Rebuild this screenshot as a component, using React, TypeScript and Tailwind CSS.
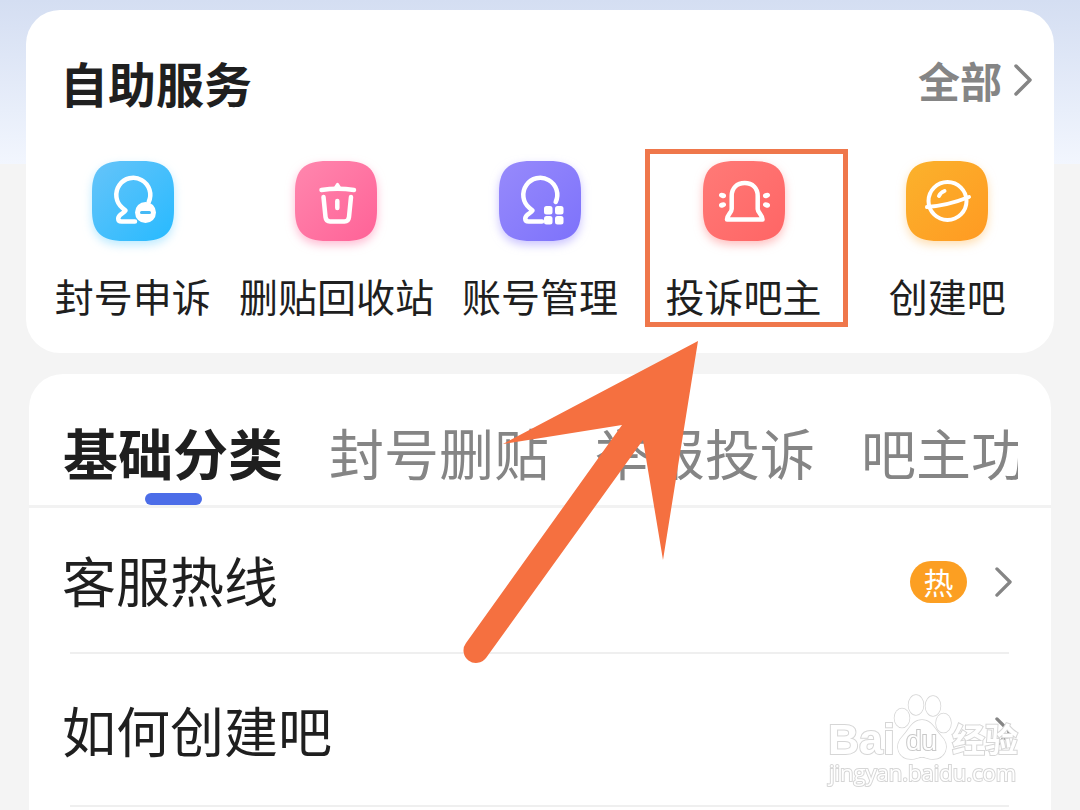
import React from 'react';

const SQUIRCLE = 'M32 0H50C73 0 82 9 82 31V49C82 71 73 80 50 80H32C9 80 0 71 0 49V31C0 9 9 0 32 0Z';
const HEAD = 'M56.7 41A17 17 0 1 0 30.5 47L33.500 49.5C32 52.500 26.5 53 26.2 57.500Q26.200 60.5 29.5 60.5H43';

const AppealIcon = () => (
    <>
        <path d={HEAD} />
        <circle cx="53.5" cy="51.5" r="10.5" fill="white" stroke="none" />
        <path d="M49.5 51.5H57.5" stroke="#45b9f5" strokeWidth="3" />
    </>
);

const TrashIcon = () => (
    <>
        <path d="M26.5 29Q42.5 26.5 59 29" />
        <path d="M40.5 26L42.5 23L44.5 26Z" strokeWidth="2.5" fill="white" />
        <path d="M28.5 36L30.5 56Q31 60.5 35 60.5H49.5Q53.5 60.500 54 56L56 36" />
        <path d="M42.3 40V47" strokeWidth="4.5" />
    </>
);

const AccountIcon = () => (
    <>
        <path d={HEAD} />
        <g fill="white" stroke="none">
            <rect x="45" y="45" width="8.5" height="8.5" rx="2.5" />
            <rect x="56" y="45" width="8.5" height="8.5" rx="2.5" />
            <rect x="45" y="55" width="8.5" height="8.5" rx="2.5" />
            <rect x="56" y="55" width="8.5" height="8.5" rx="2.5" />
        </g>
    </>
);

const AlarmIcon = () => (
    <>
        <path d="M28.7 35C28.7 27 34 22 41.7 22S54.7 27 54.7 35V48C55 52 59 53 59.5 58.500H24C24.500 53 28.5 52 28.7 48Z" />
        <g fill="white" stroke="none">
            <ellipse cx="19.5" cy="34.5" rx="3.6" ry="2.5" transform="rotate(15 19.5 34.5)" />
            <ellipse cx="19.5" cy="44" rx="3.6" ry="2.5" transform="rotate(-15 19.5 44)" />
            <ellipse cx="63.5" cy="34.5" rx="3.6" ry="2.5" transform="rotate(-15 63.5 34.5)" />
            <ellipse cx="63.5" cy="44" rx="3.6" ry="2.5" transform="rotate(15 63.5 44)" />
        </g>
    </>
);

const PlanetIcon = () => (
    <>
        <circle cx="41.5" cy="40" r="19" strokeWidth="4" />
        <path d="M21 46Q42 44.500 63 36" strokeWidth="4" />
        <path d="M33 35Q34.5 31.5 38.5 30" strokeWidth="4" />
    </>
);

const services = [
    { id: 'appeal', label: '封号申诉', from: '#66c4f9', to: '#27baff', shadow: 'drop-shadow-[0_4px_5px_#8fdcff99]', Icon: AppealIcon },
    { id: 'trash', label: '删贴回收站', from: '#ff87ae', to: '#ff6297', shadow: 'drop-shadow-[0_4px_5px_#ff8fb599]', Icon: TrashIcon },
    { id: 'account', label: '账号管理', from: '#978afb', to: '#7d72fb', shadow: 'drop-shadow-[0_4px_5px_#a79bff99]', Icon: AccountIcon },
    { id: 'report', label: '投诉吧主', from: '#ff7a77', to: '#ff6565', shadow: 'drop-shadow-[0_4px_5px_#ff959599]', Icon: AlarmIcon, marked: true },
    { id: 'create', label: '创建吧', from: '#fbb22c', to: '#ff9a22', shadow: 'drop-shadow-[0_4px_5px_#ffca8099]', Icon: PlanetIcon },
];

const tabs = ['基础分类', '封号删贴', '举报投诉', '吧主功能'];

const questions = [
    { title: '客服热线', hot: true },
    { title: '如何创建吧', hot: false },
];

const Chevron = ({ className }: { className: string }) => (
    <svg viewBox="0 0 18 32" className={className} fill="none" stroke="#858585" strokeWidth="3.5" strokeLinecap="round" strokeLinejoin="round" aria-hidden="true">
        <path d="M2 2L16 16L2 30" />
    </svg>
);

// Orange frame and arrow pointing at one service
const Marker = () => (
    <div className="absolute inset-x-0 -top-3 z-20 pointer-events-none translate-x-[3px]">
        <div className="h-[178px] border-[5px] border-[#ef774b]" />
        <svg viewBox="0 0 240 324" className="absolute top-[191px] -left-[183px] w-[240px] h-[324px]" overflow="visible" fill="#f57040" aria-hidden="true">
            <path d="M236 1L41 104L160 85L4 303A12.500 12.500 0 0 0 24 318L181 100L201 220Z" />
        </svg>
    </div>
);

const Watermark = () => (
    <svg viewBox="0 0 200 104" className="fixed right-[55px] bottom-[14px] z-30 w-[200px] h-[104px] pointer-events-none" fill="white" stroke="#d6d6d6" strokeWidth="2" paintOrder="stroke">
        <text x="3" y="62" fontFamily="Liberation Sans" fontWeight="700" fontSize="43">Bai</text>
        <path d="M97 28C107 28 110 38 116 44C126 54 120 67 108 67C102 67 101 65 97 65S92 67 86 67C74 67 68 54 78 44C84 38 87 28 97 28Z" strokeWidth="1.5" />
        <g strokeWidth="1.5">
            <ellipse cx="77" cy="26" rx="7.500" ry="9.500" />
            <ellipse cx="91" cy="13" rx="7.500" ry="10" />
            <ellipse cx="108" cy="14" rx="7.500" ry="10" />
            <ellipse cx="118.500" cy="31" rx="7.500" ry="9.500" />
        </g>
        <text x="81" y="58" fontFamily="Liberation Sans" fontSize="28" stroke="#c8c8c8">du</text>
        <text x="127" y="60" fontFamily="Noto Sans CJK SC" fontWeight="700" fontSize="33">经验</text>
        <text x="4" y="89" fontFamily="Open Sans" fontSize="22">jingyan.baidu.com</text>
    </svg>
);

const App: React.FC = () => {
    return (
        <div
            className="min-h-screen flex flex-col gap-[21px] pt-[10px] bg-[#f4f4f4] text-[#1f1f1f] overflow-hidden"
            style={{ fontFamily: "'Noto Sans CJK SC', sans-serif" }}
        >
            {/* Blue header fade behind the first card */}
            <div className="absolute inset-x-0 top-0 h-[164px] bg-linear-to-b from-[#d4def2] to-[#f2f6fe]" />

            {/* Self service */}
            <section className="relative z-10 mx-[26px] h-[343px] rounded-[34px] bg-white">
                <div className="flex items-center justify-between pt-9 pl-[34px] pr-[22px]">
                    <h2 className="text-[48px] leading-[72px] font-bold">自助服务</h2>
                    <a href="#all" className="flex items-center gap-3 pb-1 text-[42px] leading-[68px] font-bold text-[#858585]">
                        全部
                        <Chevron className="w-[18px] h-8" />
                    </a>
                </div>
                <div className="grid grid-cols-5 px-[5px] pt-[43px]">
                    {services.map(({ id, label, from, to, shadow, Icon, marked }) => (
                        <div key={id} className="relative">
                            <button type="button" className="w-full flex flex-col items-center gap-6">
                                <svg viewBox="0 0 82 80" className={`w-[82px] h-20 ${shadow}`} overflow="visible" aria-hidden="true">
                                    <defs>
                                        <linearGradient id={id} x1="0" y1="0" x2="1" y2="1">
                                            <stop offset="0" stopColor={from} />
                                            <stop offset="1" stopColor={to} />
                                        </linearGradient>
                                    </defs>
                                    <path d={SQUIRCLE} fill={`url(#${id})`} />
                                    <g fill="none" stroke="white" strokeWidth="4.5" strokeLinecap="round" strokeLinejoin="round">
                                        <Icon />
                                    </g>
                                </svg>
                                <span className="text-[39px] leading-[60px] whitespace-nowrap">{label}</span>
                            </button>
                            {marked && <Marker />}
                        </div>
                    ))}
                </div>
            </section>

            {/* Question categories */}
            <section className="relative flex-1 mx-[29px] rounded-t-[34px] bg-white">
                <div className="border-b-[3px] border-[#f2f2f2] pl-[34px] pr-[33px]">
                    <div role="tablist" className="flex h-[131px] gap-[46px] overflow-hidden">
                        {tabs.map((tab, i) => (
                            <button
                                key={tab}
                                type="button"
                                role="tab"
                                aria-selected={i === 0}
                                className={`flex flex-col shrink-0 items-center justify-end text-[55px] leading-[84px] ${i === 0 ? 'font-bold' : 'text-[#858585]'}`}
                            >
                                {tab}
                                <span className={`w-[57px] h-3 rounded-full ${i === 0 ? 'bg-[#4c6de8]' : ''}`} />
                            </button>
                        ))}
                    </div>
                </div>
                <ul>
                    {questions.map((q) => (
                        <li key={q.title} className="h-[153px] first:h-[146px] ml-[41px] mr-[42px] border-b-2 border-[#efefef]">
                            <a href="#question" className="flex items-center h-full -ml-2 -mr-[3px]">
                                <span className="flex-1 text-[54px] leading-[80px]">{q.title}</span>
                                {q.hot && (
                                    <span className="mt-1 mr-7 w-[57px] h-[42px] rounded-full bg-[#fc9f22] text-center text-[30px] leading-[40px] text-white">热</span>
                                )}
                                <Chevron className="mt-1 w-[17px] h-[30px]" />
                            </a>
                        </li>
                    ))}
                </ul>
            </section>

            <Watermark />
        </div>
    );
};

export default App;
